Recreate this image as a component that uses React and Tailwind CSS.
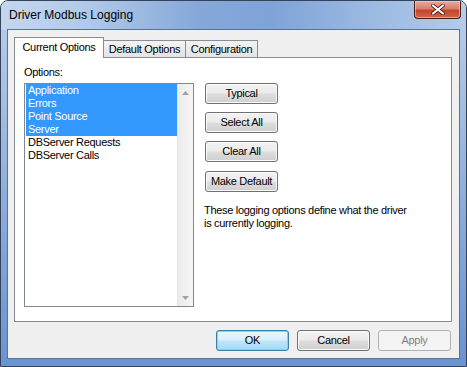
import React from "react";

function Btn({ children, className = "" }) {
  return (
    <div
      className={
        "flex items-center justify-center h-[21px] w-[73px] rounded-[3px] border border-[#707070] bg-[linear-gradient(to_bottom,#f2f2f2_0%,#ebebeb_48%,#dddddd_52%,#cfcfcf_100%)] shadow-[inset_0_0_0_1px_#fbfbfb] text-[11px] text-black " +
        className
      }
    >
      {children}
    </div>
  );
}

export default function App() {
  const items = [
    ["Application", true],
    ["Errors", true],
    ["Point Source", true],
    ["Server", true],
    ["DBServer Requests", false],
    ["DBServer Calls", false],
  ];
  return (
    <div className="w-[467px] h-[367px] overflow-hidden bg-white font-['Liberation_Sans',Arial,sans-serif]">
      <div className="relative w-[467px] h-[367px] rounded-t-[8px] border border-[#34425a] bg-[linear-gradient(to_bottom,#b9cfea_0%,#a2bde3_30%,#7fa4d9_70%,#6a94d0_100%)] flex flex-col px-[6px] pb-[7px] overflow-hidden">
        {/* glass streaks */}
        <div className="absolute left-0 right-0 top-0 h-[29px] bg-[linear-gradient(to_right,#c3d7ee_0%,#b2cae9_18%,#86a9da_42%,#7ea3d7_58%,#9ab8e1_78%,#b4cbe9_100%)]" />
        {/* title */}
        <div className="relative h-[28px] flex items-center pl-[2px] text-[12px] text-black">
          <span className="leading-none">Driver Modbus Logging</span>
        </div>
        {/* close button */}
        <div className="absolute right-[5px] top-0 h-[18px] w-[47px] rounded-b-[4px] border border-t-0 border-[#4b1d14] bg-[linear-gradient(to_bottom,#e9a99a_0%,#d9806c_45%,#c4442b_55%,#d0664c_100%)] shadow-[inset_0_0_0_1px_rgba(255,220,210,0.5)] flex items-center justify-center">
          <svg width="14" height="11" viewBox="0 0 14 11">
            <path d="M2 1.5 L12 9.5 M12 1.5 L2 9.5" stroke="#4a1a12" strokeWidth="3.6" strokeLinecap="round" />
            <path d="M2 1.5 L12 9.5 M12 1.5 L2 9.5" stroke="#ffffff" strokeWidth="2.2" strokeLinecap="round" />
          </svg>
        </div>
        {/* client */}
        <div className="relative flex-1 border border-[#5a7298] bg-[#f0f0f0] flex flex-col text-[11px] tracking-[-0.3px] text-black">
          {/* tabs */}
          <div className="h-[27px] flex items-end pl-[6px]">
            <div className="relative z-10 -mb-px h-[21px] w-[90px] border border-b-0 border-[#898c95] bg-white flex items-center justify-center pb-[1px]">
              Current Options
            </div>
            <div className="h-[17px] w-[83px] -ml-px border border-b-0 border-[#898c95] bg-[linear-gradient(to_bottom,#f3f3f3,#e3e3e3)] flex items-center justify-center">
              Default Options
            </div>
            <div className="h-[17px] w-[73px] -ml-px border border-b-0 border-[#898c95] bg-[linear-gradient(to_bottom,#f3f3f3,#e3e3e3)] flex items-center justify-center">
              Configuration
            </div>
          </div>
          {/* panel */}
          <div className="ml-[6px] w-[438px] h-[265px] border border-[#898c95] bg-white flex pl-[9px] pt-[8px]">
            <div className="flex flex-col">
              <div className="leading-[13px] h-[13px]">Options:</div>
              <div className="mt-[4px] w-[170px] h-[224px] border border-[#828790] bg-white flex">
                <div className="flex-1 pl-[1px] pt-0">
                  {items.map(([t, sel]) => (
                    <div
                      key={t}
                      className={
                        sel
                          ? "h-[13px] leading-[13px] pl-[2px] bg-[#3399ff] text-white"
                          : "h-[13px] leading-[13px] pl-[2px] text-black"
                      }
                    >
                      {t}
                    </div>
                  ))}
                </div>
                <div className="w-[16px] h-full border-l border-[#e6e6e6] bg-[linear-gradient(to_right,#ececec,#f5f5f5)] flex flex-col justify-between items-center">
                  <div className="h-[17px] flex items-center justify-center">
                    <svg width="7" height="4" viewBox="0 0 7 4">
                      <path d="M0 4 L3.5 0 L7 4 Z" fill="#a3a3a3" />
                    </svg>
                  </div>
                  <div className="h-[17px] flex items-center justify-center">
                    <svg width="7" height="4" viewBox="0 0 7 4">
                      <path d="M0 0 L3.5 4 L7 0 Z" fill="#a3a3a3" />
                    </svg>
                  </div>
                </div>
              </div>
            </div>
            <div className="ml-[10px] pt-[17px] flex flex-col">
              <div className="flex flex-col gap-[8px] pl-[1px]">
                <Btn>Typical</Btn>
                <Btn>Select All</Btn>
                <Btn>Clear All</Btn>
                <Btn className="mt-[1px]">Make Default</Btn>
              </div>
              <div className="mt-[12px] leading-[13px] w-[220px]">
                These logging options define what the driver
                <br />
                is currently logging.
              </div>
            </div>
          </div>
          {/* bottom buttons */}
          <div className="mt-[8px] flex pl-[208px] gap-[8px]">
            <div className="flex items-center justify-center h-[21px] w-[73px] rounded-[3px] border border-[#3c7fb1] bg-[linear-gradient(to_bottom,#eaf6fd_0%,#d9f0fc_48%,#bee6fd_52%,#a7d9f5_100%)] shadow-[inset_0_0_0_1px_#7fd3f9]">
              OK
            </div>
            <Btn>Cancel</Btn>
            <div className="flex items-center justify-center h-[21px] w-[73px] rounded-[3px] border border-[#adb2b5] bg-[#f4f4f4] text-[#838383]">
              Apply
            </div>
          </div>
        </div>
      </div>
    </div>
  );
}
